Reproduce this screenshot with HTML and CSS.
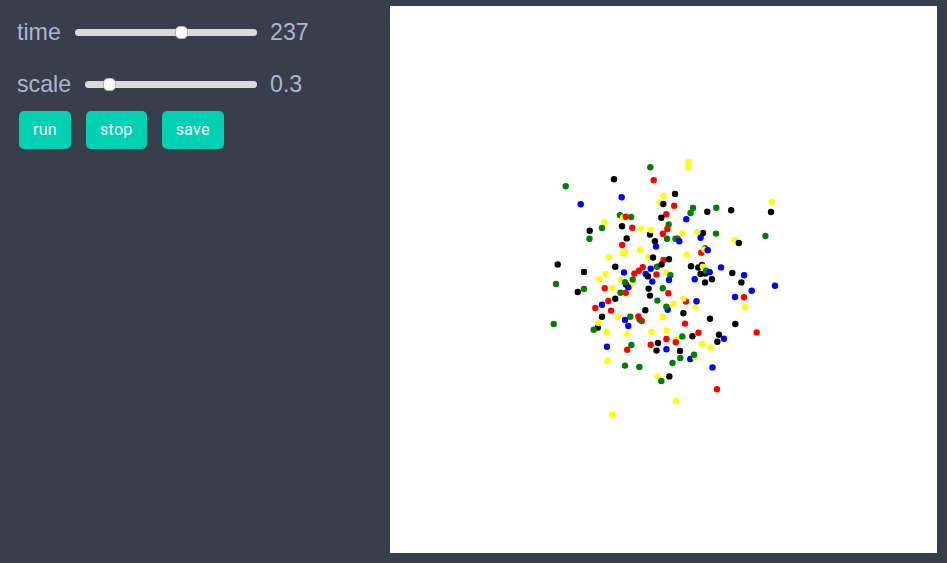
FILE: index.html
```html
<!DOCTYPE html>
<html lang="en">
<head>
<meta charset="utf-8">
<title>Particles</title>
<link rel="stylesheet" href="styles.css">
</head>
<body>
<main class="app">
  <section class="controls">
    <div class="row">
      <label class="name" for="time">time</label>
      <input class="slider" id="time" type="range" min="0" max="400" value="236">
      <output class="value">237</output>
    </div>
    <div class="row">
      <label class="name" for="scale">scale</label>
      <input class="slider" id="scale" type="range" min="0" max="1000" value="111">
      <output class="value">0.3</output>
    </div>
    <div class="buttons">
      <button class="button">run</button>
      <button class="button">stop</button>
      <button class="button">save</button>
    </div>
  </section>
  <svg class="plot" id="plot" viewBox="390 6 547 547"></svg>
</main>
<script src="plot.js"></script>
</body>
</html>
```
FILE: styles.css
```css
* { box-sizing: border-box; }
body {
  margin: 0;
  background: #383e4b;
  color: #a9b7d1;
  font-family: "Liberation Sans", Arial, sans-serif;
  overflow: hidden;
}
.app {
  display: grid;
  grid-template-columns: 390px 547px;
  height: 563px;
  padding-top: 6px;
}
.controls { padding-left: 17px; }
.row {
  display: flex;
  align-items: center;
  width: 320px;
  height: 52px;
}
.name, .value {
  font-size: 23.2px;
  line-height: 28px;
}
.name { margin-right: 14px; }
.value { width: 67px; flex: none; }
.slider {
  -webkit-appearance: none;
  appearance: none;
  flex: 1;
  min-width: 0;
  height: 7px;
  margin: 0 13px 0 0;
  border-radius: 4px;
  background: #dbdbdb;
}
.slider::-webkit-slider-thumb {
  -webkit-appearance: none;
  width: 13px;
  height: 13px;
  border: 1px solid #b5b5b5;
  border-radius: 5px;
  background: #fff;
}
.buttons {
  display: flex;
  gap: 15px;
  padding-left: 2px;
  margin-top: 1px;
}
.button {
  height: 38px;
  padding: 0 14px 2px;
  border: 0;
  border-radius: 5px;
  background: #00d1b2;
  color: #fff;
  font: 16px Roboto, sans-serif;
  letter-spacing: 0.3px;
}
.plot {
  display: block;
  width: 547px;
  height: 547px;
  background: #fff;
}
.yellow { fill: #ffff00; }
.black { fill: #000; }
.red { fill: #ff0000; }
.green { fill: #008000; }
.blue { fill: #0000ff; }
```
FILE: plot.js
```js
const colors = { y: "yellow", k: "black", r: "red", g: "green", b: "blue" };

// Each particle: colour key, x, y. Later particles are drawn on top.
const particles = `
g 565.7 186.3;b 580.7 204.3;k 614 179.3;b 621.7 197.3;g 620 215.3;y 623 217.5;g 631.2 217;r 625.7 216.7
y 604.3 222;g 602 228;k 589.7 230.7;g 589.5 238.7;k 622 226.3;k 626.7 238.4
g 650.3 167.3;r 653.7 180.3;y 688.3 162;y 688.2 167;y 663.3 195.7;k 675 194;y 659.5 202.5;k 663.3 204
r 674.2 205.7;r 666.3 214.3;k 661.3 217.7;g 693 208;g 690.5 213;b 686.3 219.3;k 707.3 211.7
r 632.2 227.8;y 640.8 228.8;k 650 234.5;y 651 230;g 668.7 224.4;r 667.3 229;r 662.8 233.7
y 682.4 233;k 703 233;y 697.4 232;b 700.6 237.7;g 667 238.7;r 677.5 238.8;g 675.5 238.7;b 679.3 241.3
r 622.2 245;y 622.5 253.5;y 624.7 252.8;y 640 249.8;k 655 241.3;b 656 246.5;y 648 257.3;k 653 257.5
r 663.5 260;k 669 259.3;g 657 266.8;k 661.5 264.5;b 650.7 268.7;r 642.7 267.3;r 638.8 270.8;r 634.3 273.7
b 624 272.5;b 645.7 274;k 648 276.4;r 656.5 274.5;b 652.3 281.6;y 666.5 272.3;g 670.4 275.3;b 669 280
k 615.3 266.7;y 620.7 279.6;g 632.7 279.7;y 631 285.5;k 626 284.5;g 625 282.2;b 628.3 287.5
g 716 233.6;k 705 248.5;r 701.3 252.8;y 704.3 249.5;b 707.7 250.3;y 686.7 254.4
k 691 266.2;k 698.3 267.5;k 702 265;y 702.9 266.6;k 700.5 274;k 705 273.5;g 706 270.7;b 709.7 272.3
k 712 279.3;k 705 282.4;b 694.7 279.3;b 721 267.4
g 716.3 207.7;k 731.2 210.3;y 771.7 201.7;k 771 212;g 765.4 236;y 734.7 240.3;k 738.8 243;k 732.3 273;b 744.1 275.3
k 557.7 264.5;k 584 272;g 556 284;g 584 289;k 577.8 292;y 609.3 257.3;y 605.7 274;y 599.4 279.3
r 604.8 288.3;y 612.4 288;g 620.5 292.8;y 627 293.5;r 625.7 292.8;k 615.3 298.8;r 608.3 301;b 602 304.7
r 595.3 308;r 611 310.6;k 602 316.8;y 617.8 316.8
k 648.6 288.6;k 650 295.6;g 662.8 288.3;r 668.3 293.3;g 657.4 300.6;y 673.4 303.7;r 686 301.6;y 683.3 298.4
y 695.6 306.5;b 696.5 301.3;b 667.7 309.8;g 666.3 306.6;k 683.4 313.3;k 645.3 310.3;y 662.7 316.8;r 685 323.6
g 630.3 316.7;b 625 320;b 628.3 326;r 641.7 321;g 639.6 319.5;r 638.4 316.4;y 627.3 333.8;y 651.4 331.8
y 666.5 330.4;r 666.4 339;y 676.7 339.4;g 682.3 336.4;k 692.4 336.3;r 698.4 332.8
k 741.4 282.4;b 751.7 290.7;b 775 285.8;b 735 297;r 744 297.3;y 745 307;k 710 318.7;k 735.3 324;r 756.7 332.4
b 724 338.7;k 719 334.8;k 717.4 341.7;y 702 344;y 710.3 347.4
g 553.7 324;k 597.8 327.6;y 598.6 323;g 593.7 329.7;y 606.7 332;b 607 346.8;y 607.3 361;g 631.4 345
r 627.2 349.8;g 625 365.6;g 639.4 367;y 612.5 414.7
r 650.7 344.7;k 658 343;k 656.5 350.6;b 666.4 349.3;r 675.8 342.3;k 680 351;g 680.3 358;g 672.5 363
b 690.3 359;y 695 357;g 694 354.7;y 657.6 376.4;k 669.3 376.4;g 661.3 381;b 712.5 367.4;r 717 389.3;y 676 401
`;

const plot = document.getElementById("plot");
for (const entry of particles.trim().split(/[;\n]/)) {
  const [key, x, y] = entry.split(" ");
  const dot = document.createElementNS("http://www.w3.org/2000/svg", "circle");
  dot.setAttribute("class", colors[key]);
  dot.setAttribute("cx", x);
  dot.setAttribute("cy", y);
  dot.setAttribute("r", 3.2);
  plot.appendChild(dot);
}
```
